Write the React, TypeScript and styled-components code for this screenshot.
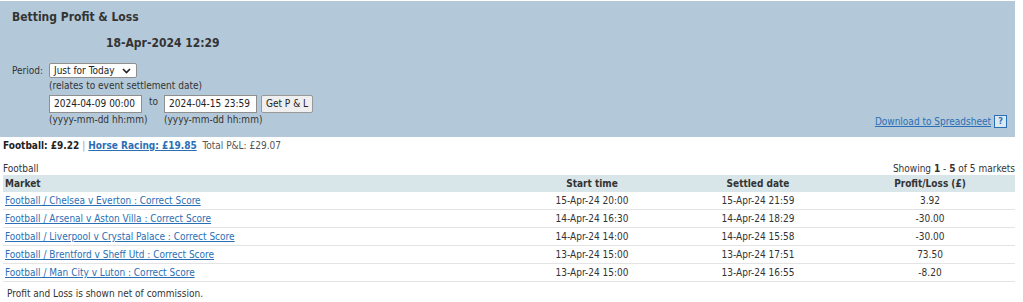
import React from 'react';
import styled, { createGlobalStyle } from 'styled-components';

const GlobalStyle = createGlobalStyle`
  body {
    margin: 0;
    background: #ffffff;
    font-family: "DejaVu Sans Condensed", "DejaVu Sans", sans-serif;
    font-stretch: condensed;
    font-size: 10px;
    color: #333333;
  }
`;

const Page = styled.div`
  width: 1015px;
  padding-top: 1px;
  white-space: nowrap;
`;

const Panel = styled.div`
  background: #b3c9d9;
  padding: 8px 8px 9px 12px;
`;

const Title = styled.h1`
  margin: 0;
  font-size: 12px;
  line-height: 17px;
  font-weight: bold;
  color: #333;
`;

const Clock = styled.div`
  margin: 9px 0 0 94px;
  font-size: 12px;
  line-height: 17px;
  font-weight: bold;
  color: #333;
`;

const Form = styled.div`
  display: grid;
  grid-template-columns: 37px 1fr;
  margin-top: 11px;
`;

const Label = styled.span`
  line-height: 15px;
  color: #333;
`;

const Note = styled.div`
  line-height: 15px;
  color: #333;
`;

const Select = styled.div`
  position: relative;
  width: 82px;
  height: 13px;
  background: #fff;
  border: 1px solid #8f8f8f;
  border-radius: 2px;
  padding-left: 4px;
  line-height: 13px;
  color: #222;
`;

const Chevron = styled.svg`
  position: absolute;
  right: 5px;
  top: 4px;
`;

const DateRow = styled.div`
  display: flex;
  align-items: flex-start;
  margin-top: 2px;
`;

const DateInput = styled.div`
  width: 87px;
  height: 16px;
  background: #fff;
  border: 1px solid #8f8f8f;
  padding-left: 4px;
  line-height: 16px;
  color: #222;
`;

const To = styled.span`
  width: 22px;
  padding-left: 7px;
  box-sizing: border-box;
  line-height: 14px;
`;

const Button = styled.div`
  margin-left: 4px;
  width: 50px;
  height: 16px;
  background: #efefef;
  border: 1px solid #999;
  border-radius: 2px;
  text-align: center;
  line-height: 16px;
  color: #222;
`;

const HintRow = styled.div`
  display: flex;
  align-items: flex-start;
`;

const Hint = styled.span<{ width: number }>`
  width: ${p => p.width}px;
  line-height: 14px;
`;

const Download = styled.div`
  margin-left: auto;
  margin-top: 2px;
  display: flex;
  align-items: center;
  gap: 3px;
`;

const Link = styled.a<{ bold?: boolean }>`
  color: #2a6fb5;
  text-decoration: underline;
  font-weight: ${p => (p.bold ? 'bold' : 'normal')};
`;

const Help = styled.span`
  width: 11px;
  height: 11px;
  border: 1px solid #2a6fb5;
  color: #2a6fb5;
  font-weight: bold;
  font-size: 9px;
  line-height: 11px;
  text-align: center;
  background: #dce8f2;
`;

const Summary = styled.div`
  padding-left: 3px;
  line-height: 15px;
  margin-top: 1px;
  color: #555;
`;

const Strong = styled.b`
  color: #222;
`;

const Sep = styled.span`
  color: #999;
  margin: 0 3px;
`;

const SectionHead = styled.div`
  display: flex;
  justify-content: space-between;
  align-items: flex-end;
  margin-top: 10px;
  padding-left: 3px;
  line-height: 12px;
`;

const Table = styled.table`
  margin-left: 3px;
  width: 1012px;
  border-collapse: collapse;
`;

const Th = styled.th<{ align?: string; width?: number }>`
  background: #d8e6e9;
  text-align: ${p => p.align || 'center'};
  width: ${p => (p.width ? p.width + 'px' : 'auto')};
  height: 17px;
  padding: 0 2px;
  font-weight: bold;
  color: #333;
`;

const Td = styled.td<{ align?: string }>`
  text-align: ${p => p.align || 'center'};
  height: 17px;
  padding: 0 2px;
  border-bottom: 1px solid #e4e4e4;
  color: #333;
`;

const Footer = styled.div`
  margin-top: 5px;
  padding-left: 7px;
  line-height: 14px;
`;

const rows = [
  ['Football / Chelsea v Everton : Correct Score', '15-Apr-24 20:00', '15-Apr-24 21:59', '3.92'],
  ['Football / Arsenal v Aston Villa : Correct Score', '14-Apr-24 16:30', '14-Apr-24 18:29', '-30.00'],
  ['Football / Liverpool v Crystal Palace : Correct Score', '14-Apr-24 14:00', '14-Apr-24 15:58', '-30.00'],
  ['Football / Brentford v Sheff Utd : Correct Score', '13-Apr-24 15:00', '13-Apr-24 17:51', '73.50'],
  ['Football / Man City v Luton : Correct Score', '13-Apr-24 15:00', '13-Apr-24 16:55', '-8.20'],
];

const App: React.FC = () => {
  return (
    <Page>
      <GlobalStyle />
      <Panel>
        <Title>Betting Profit &amp; Loss</Title>
        <Clock>18-Apr-2024 12:29</Clock>
        <Form>
          <Label>Period:</Label>
          <div>
            <Select>
              Just for Today
              <Chevron width="9" height="6" viewBox="0 0 9 6">
                <path d="M1 1l3.5 3.5L8 1" fill="none" stroke="#222" strokeWidth="1.6" />
              </Chevron>
            </Select>
            <Note>(relates to event settlement date)</Note>
          </div>
          <span />
          <div>
            <DateRow>
              <DateInput>2024-04-09 00:00</DateInput>
              <To>to</To>
              <DateInput>2024-04-15 23:59</DateInput>
              <Button>Get P &amp; L</Button>
            </DateRow>
            <HintRow>
              <Hint width={115}>(yyyy-mm-dd hh:mm)</Hint>
              <Hint width={100}>(yyyy-mm-dd hh:mm)</Hint>
              <Download>
                <Link href="#">Download to Spreadsheet</Link>
                <Help>?</Help>
              </Download>
            </HintRow>
          </div>
        </Form>
      </Panel>
      <Summary>
        <Strong>Football: £9.22</Strong>
        <Sep>|</Sep>
        <Link href="#" bold>Horse Racing: £19.85</Link>
        &nbsp;&nbsp;Total P&amp;L: £29.07
      </Summary>
      <SectionHead>
        <span>Football</span>
        <span>Showing <b>1</b> - <b>5</b> of 5 markets</span>
      </SectionHead>
      <Table>
        <thead>
          <tr>
            <Th align="left">Market</Th>
            <Th width={154}>Start time</Th>
            <Th width={170}>Settled date</Th>
            <Th width={166}>Profit/Loss (£)</Th>
          </tr>
        </thead>
        <tbody>
          {rows.map(r => (
            <tr key={r[0]}>
              <Td align="left"><Link href="#">{r[0]}</Link></Td>
              <Td>{r[1]}</Td>
              <Td>{r[2]}</Td>
              <Td>{r[3]}</Td>
            </tr>
          ))}
        </tbody>
      </Table>
      <Footer>Profit and Loss is shown net of commission.</Footer>
    </Page>
  );
};

export default App;
